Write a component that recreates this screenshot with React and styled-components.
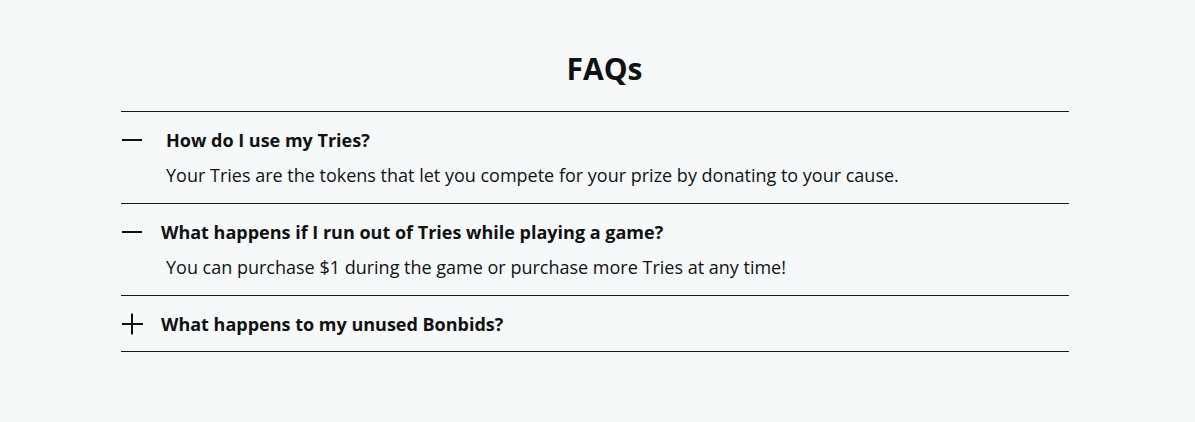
import styled, { createGlobalStyle } from 'styled-components';

const Global = createGlobalStyle`
body {
  margin: 0;
  background: #f5f9fa;
  font-family: "Open Sans", "Noto Sans", sans-serif;
  color: #111;
}
`

const Page = styled.div`
padding: 50px 126px 0 121px;
`

const Title = styled.h2`
margin: 0 0 23px;
padding-left: 19px;
text-align: center;
font-size: 30px;
font-weight: 700;
line-height: 38px;
color: #111;
`

const List = styled.div`
border-top: 1px solid #1a1a1a;
`

const Item = styled.div`
border-bottom: 1px solid #1a1a1a;
padding: 16px 0 ${props => (props.open ? 16 : 15)}px;
`

const Question = styled.div`
display: flex;
align-items: center;
height: 24px;
font-size: 18px;
font-weight: 700;
`

const Icon = styled.span`
display: flex;
align-items: center;
justify-content: center;
width: 22px;
margin-right: ${props => props.gap}px;
`

const Answer = styled.p`
margin: 11px 0 0 45px;
font-size: 18px;
line-height: 24px;
`

const Minus = () => (
  <svg width="22" height="22" viewBox="0 0 22 22">
    <line x1="1" y1="11" x2="21" y2="11" stroke="#111" strokeWidth="2" />
  </svg>
)

const Plus = () => (
  <svg width="22" height="22" viewBox="0 0 22 22">
    <line x1="1" y1="11" x2="22" y2="11" stroke="#111" strokeWidth="2" />
    <line x1="11" y1="0.5" x2="11" y2="21.5" stroke="#111" strokeWidth="2" />
  </svg>
)

const faqs = [
  {
    q: 'How do I use my Tries?',
    a: 'Your Tries are the tokens that let you compete for your prize by donating to your cause.',
    open: true,
    gap: 23,
  },
  {
    q: 'What happens if I run out of Tries while playing a game?',
    a: 'You can purchase $1 during the game or purchase more Tries at any time!',
    open: true,
    gap: 18,
  },
  {
    q: 'What happens to my unused Bonbids?',
    open: false,
    gap: 18,
  },
]

export default function App() {
  return (
    <>
      <Global />
      <Page>
        <Title>FAQs</Title>
        <List>
          {faqs.map(f => (
            <Item key={f.q} open={f.open}>
              <Question>
                <Icon gap={f.gap}>{f.open ? <Minus /> : <Plus />}</Icon>
                {f.q}
              </Question>
              {f.open && <Answer>{f.a}</Answer>}
            </Item>
          ))}
        </List>
      </Page>
    </>
  )
}
